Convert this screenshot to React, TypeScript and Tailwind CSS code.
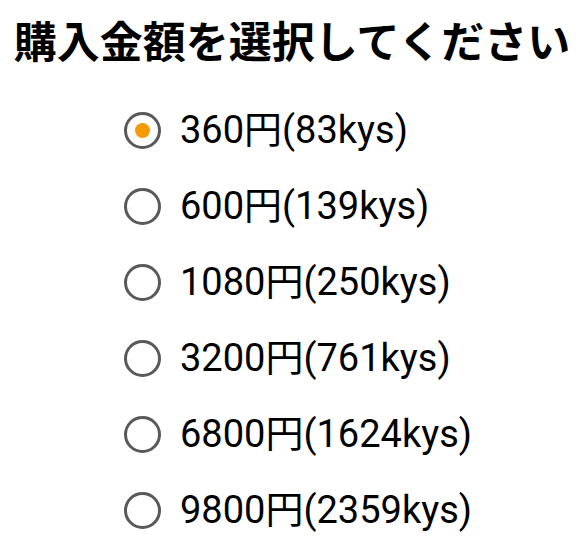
import { useState } from 'react'

const OPTIONS = [
  { yen: 360, kys: 83 },
  { yen: 600, kys: 139 },
  { yen: 1080, kys: 250 },
  { yen: 3200, kys: 761 },
  { yen: 6800, kys: 1624 },
  { yen: 9800, kys: 2359 },
]

export default function App() {
  const [selected, setSelected] = useState(0)

  return (
    <div className="w-[584px] h-[555px] bg-white overflow-hidden font-['Roboto','Noto_Sans_CJK_JP',sans-serif] text-black">
      <h1 className="pt-[18px] text-center text-[43px] leading-none font-bold font-['Noto_Sans_CJK_JP',sans-serif] whitespace-nowrap">
        購入金額を選択してください
      </h1>
      <div className="mt-[31px] pl-[124px] flex flex-col">
        {OPTIONS.map((o, i) => (
          <label
            key={o.yen}
            onClick={() => setSelected(i)}
            className="h-[76px] flex items-center cursor-pointer"
          >
            <span className="w-[37px] h-[37px] rounded-full border-[3px] border-[#595959] flex items-center justify-center shrink-0">
              {selected === i && <span className="w-[15px] h-[15px] rounded-full bg-[#f59a00]" />}
            </span>
            <span className="ml-[19px] text-[38px] leading-none">
              {o.yen}円({o.kys}kys)
            </span>
          </label>
        ))}
      </div>
    </div>
  )
}
